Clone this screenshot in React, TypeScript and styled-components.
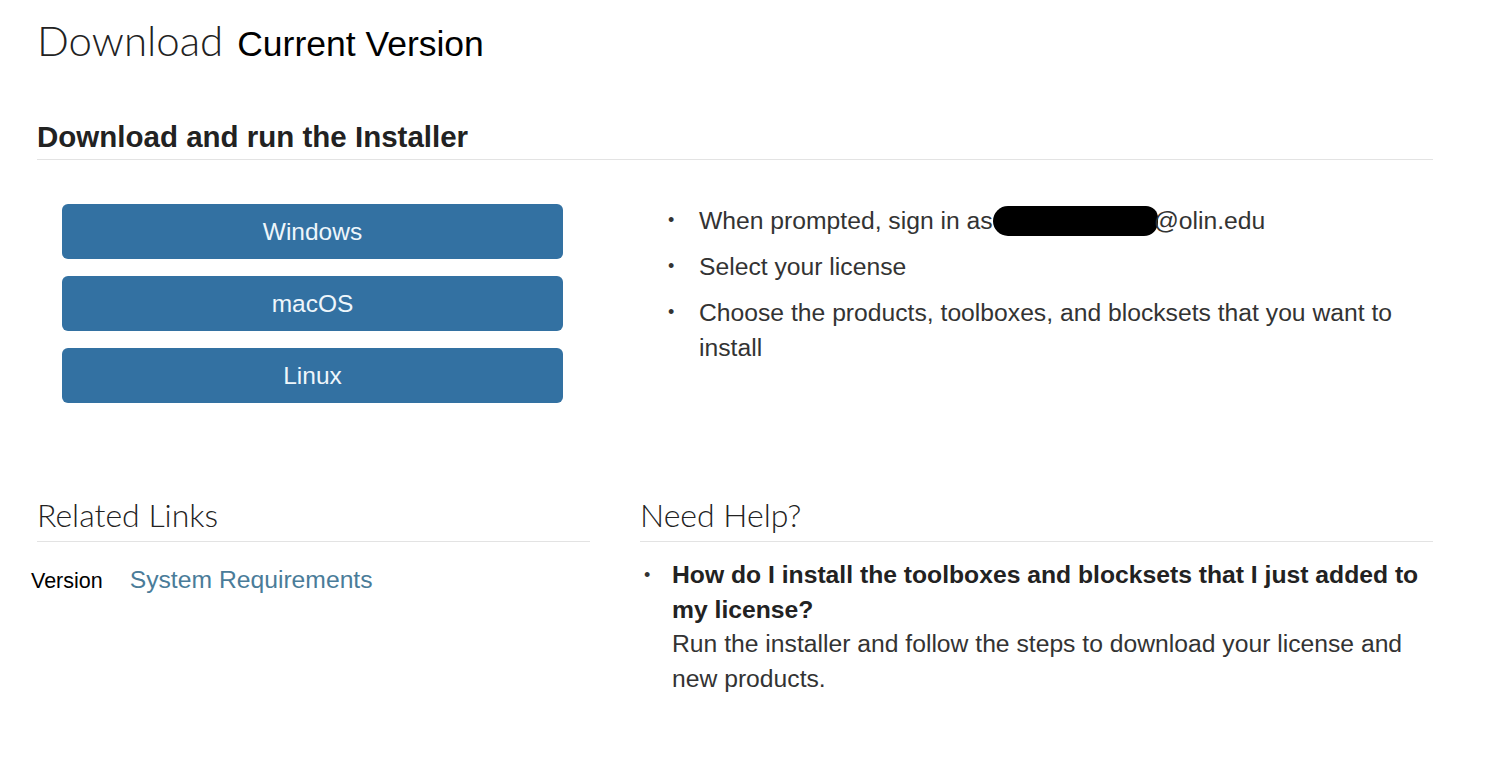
import React from "react";
import styled, { createGlobalStyle } from "styled-components";

const GlobalStyle = createGlobalStyle`
  html, body { margin: 0; padding: 0; background: #ffffff; }
  body { font-family: "Liberation Sans", Arial, sans-serif; color: #333; }
  * { box-sizing: border-box; }
`;

const Page = styled.div`
  width: 1494px;
  padding: 18px 61px 0 37px;
`;

const TitleRow = styled.div`
  display: flex;
  align-items: baseline;
  gap: 14px;
  height: 44px;
`;

const LightTitle = styled.span`
  font-family: "Lato", "Open Sans", sans-serif;
  font-weight: 300;
  font-size: 42px;
  line-height: 44px;
  color: #222;
`;

const PlainTitle = styled.span`
  font-family: "Liberation Sans", Arial, sans-serif;
  font-size: 35.5px;
  line-height: 44px;
  color: #000;
`;

const SectionHeading = styled.h2`
  margin: 58px 0 0;
  padding-bottom: 5px;
  font-size: 29.5px;
  line-height: 34px;
  font-weight: 700;
  color: #222;
  border-bottom: 1px solid #e3e3e3;
`;

const Columns = styled.div`
  display: grid;
  grid-template-columns: 553px 1fr;
  column-gap: 50px;
`;

const ButtonStack = styled.div`
  display: flex;
  flex-direction: column;
  gap: 17px;
  padding: 44px 0 0 25px;
`;

const OsButton = styled.a`
  display: flex;
  align-items: center;
  justify-content: center;
  width: 501px;
  height: 55px;
  border-radius: 6px;
  background: #3371a2;
  color: #eef6fb;
  font-size: 24.5px;
  text-decoration: none;
`;

const BulletList = styled.ul<{ $indent: number; $top: number }>`
  list-style: none;
  margin: 0;
  padding: ${(p) => p.$top}px 0 0 ${(p) => p.$indent}px;
  display: flex;
  flex-direction: column;
  gap: 11px;
`;

const Item = styled.li<{ $bulletWidth: number }>`
  display: grid;
  grid-template-columns: ${(p) => p.$bulletWidth}px 1fr;
  font-size: 24.7px;
  line-height: 35px;
  color: #333;
`;

const Bullet = styled.span`
  font-size: 18px;
  color: #333;
`;

const Redacted = styled.span`
  display: inline-block;
  width: 165px;
  height: 30px;
  margin-right: -4px;
  vertical-align: -7px;
  background: #000;
  border-radius: 15px 12px 14px 15px;
`;

const SubHeading = styled.h3`
  margin: 92px 0 0;
  padding-bottom: 6px;
  font-family: "Lato", "Open Sans", sans-serif;
  font-weight: 300;
  font-size: 32px;
  line-height: 40px;
  color: #222;
  border-bottom: 1px solid #e3e3e3;
`;

const LinkRow = styled.div`
  display: flex;
  align-items: baseline;
  gap: 27px;
  margin: 20px 0 0 -6px;
  line-height: 35px;
`;

const Label = styled.span`
  font-size: 21.5px;
  color: #000;
`;

const TextLink = styled.a`
  font-size: 24.7px;
  color: #4a7c99;
  text-decoration: none;
`;

const Question = styled.strong`
  display: block;
  font-weight: 700;
  color: #222;
`;

const HelpItem = styled(Item)`
  line-height: 34.5px;
`;

export default function App() {
  return (
    <Page>
      <GlobalStyle />
      <TitleRow>
        <LightTitle>Download</LightTitle>
        <PlainTitle>Current Version</PlainTitle>
      </TitleRow>
      <SectionHeading>Download and run the Installer</SectionHeading>
      <Columns>
        <ButtonStack>
          <OsButton href="#">Windows</OsButton>
          <OsButton href="#">macOS</OsButton>
          <OsButton href="#">Linux</OsButton>
        </ButtonStack>
        <BulletList $indent={28} $top={43}>
          <Item $bulletWidth={31}>
            <Bullet>•</Bullet>
            <span>
              When prompted, sign in as<Redacted />@olin.edu
            </span>
          </Item>
          <Item $bulletWidth={31}>
            <Bullet>•</Bullet>
            <span>Select your license</span>
          </Item>
          <Item $bulletWidth={31}>
            <Bullet>•</Bullet>
            <span>Choose the products, toolboxes, and blocksets that you want to install</span>
          </Item>
        </BulletList>
        <div>
          <SubHeading>Related Links</SubHeading>
          <LinkRow>
            <Label>Version</Label>
            <TextLink href="#">System Requirements</TextLink>
          </LinkRow>
        </div>
        <div>
          <SubHeading>Need Help?</SubHeading>
          <BulletList $indent={4} $top={16}>
            <HelpItem $bulletWidth={28}>
              <Bullet>•</Bullet>
              <span>
                <Question>How do I install the toolboxes and blocksets that I just added to my license?</Question>
                Run the installer and follow the steps to download your license and new products.
              </span>
            </HelpItem>
          </BulletList>
        </div>
      </Columns>
    </Page>
  );
}
